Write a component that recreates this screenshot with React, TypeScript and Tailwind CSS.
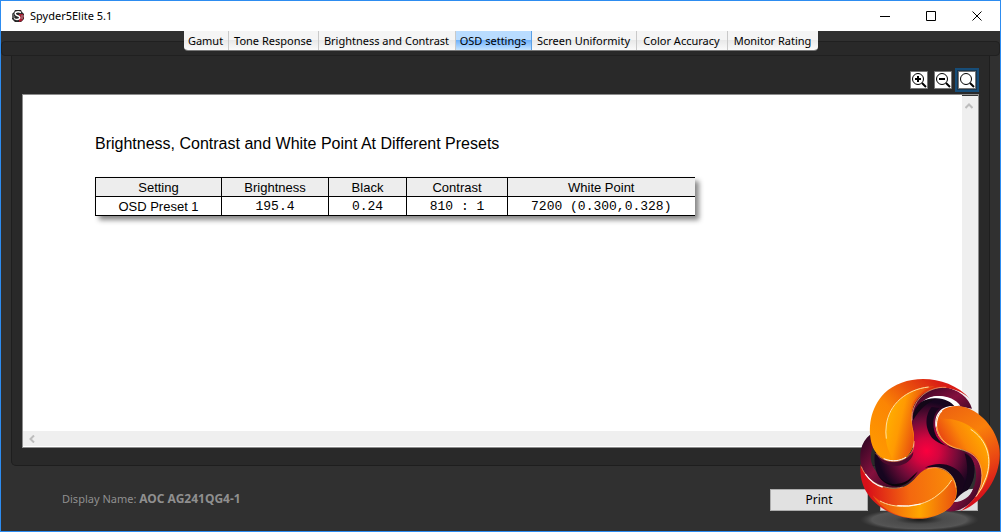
import { clsx } from "clsx";

const tabs = [
  { label: "Gamut", width: "w-[45px]" },
  { label: "Tone Response", width: "w-[90px]" },
  { label: "Brightness and Contrast", width: "w-[137px]" },
  { label: "OSD settings", width: "w-[76px]" },
  { label: "Screen Uniformity", width: "w-[105px]" },
  { label: "Color Accuracy", width: "w-[91px]" },
  { label: "Monitor Rating", width: "w-[90px]" },
];

const columns = [
  { label: "Setting", width: "w-[126px]" },
  { label: "Brightness", width: "w-[107px]" },
  { label: "Black", width: "w-[78px]" },
  { label: "Contrast", width: "w-[101px]" },
  { label: "White Point", width: "w-[187px]" },
];

const presets = [["OSD Preset 1", "195.4", "0.24", "810 : 1", "7200 (0.300,0.328)"]];

export default function App() {
  return (
    <div className="relative flex min-h-screen flex-col overflow-hidden border border-[#2d8cf0] bg-[#303030] font-['Noto_Sans',sans-serif] text-[12px]">
      <TitleBar />

      <main className="flex grow flex-col pt-2.5">
        <div className="flex h-[15px] justify-center rounded-sm border border-[#202020] bg-[#292929]">
          <nav className="-mt-[11px] flex h-5 overflow-hidden rounded-b-[4px] border-b border-[#777]">
            {tabs.map((tab) => (
              <Tab key={tab.label} label={tab.label} width={tab.width} active={tab.label === "OSD settings"} />
            ))}
          </nav>
        </div>

        <section className="mx-2.5 flex grow flex-col rounded-b-[5px] border border-t-0 border-[#1e1e1e] bg-[#292929] px-2.5 pb-[17px]">
          <div className="flex h-[38px] items-end justify-end gap-[3px] pb-0.5">
            <ZoomButton label="Zoom in" sign="plus" />
            <ZoomButton label="Zoom out" sign="minus" />
            <ZoomButton label="Fit to window" focused />
          </div>
          <Report />
        </section>
      </main>

      <footer className="flex h-[65px] items-center justify-between pr-[22px] pl-[61px]">
        <p className="text-[11px] text-[#8f8f8f]">
          Display Name: <strong className="text-[12px] font-bold">AOC AG241QG4-1</strong>
        </p>
        <div className="flex gap-3 pt-0.5">
          <button className="h-[22px] w-[98px] border border-[#adadad] bg-[#e1e1e1] text-black">Print</button>
          <button aria-label="Close" className="h-[22px] w-[98px] border border-[#adadad] bg-[#e1e1e1]" />
        </div>
      </footer>

      <Logo />
    </div>
  );
}

function TitleBar() {
  return (
    <header className="flex h-[30px] items-center bg-white pl-2.5 text-black">
      <svg width="14" height="14" viewBox="0 0 14 14" aria-hidden="true">
        <path d="M4 1h6l1 2 2 2v5l-3 3H4l-3-3V5l2-2z" fill="#272727" />
        <path d="M8 5h4l1 3-2 4-3 1z" fill="#a51c30" />
        <path d="M10 3.500Q7 2 4.500 3.500Q3.500 5.500 6 6.500Q9.500 7.500 8.500 9.500Q6 11.500 3 9.500" fill="none" stroke="#fff" strokeWidth="1.500" />
        <path d="M1 6h2M1 8h3M10 7h3M10 9h2" stroke="#999" />
      </svg>
      <h1 className="ml-[5px] grow text-[11px]">Spyder5Elite 5.1</h1>
      <WindowButton label="Minimize" d="M0 5.500h10" />
      <WindowButton label="Maximize" d="M.5.5h9v9h-9z" />
      <WindowButton label="Close window" d="M.5.5l9 9M9.500.5l-9 9" />
    </header>
  );
}

function WindowButton({ label, d }: { label: string; d: string }) {
  return (
    <button aria-label={label} className="flex h-full w-[46px] items-center justify-center">
      <svg width="10" height="10" viewBox="0 0 10 10" fill="none" stroke="#000">
        <path d={d} />
      </svg>
    </button>
  );
}

function Tab({ label, width, active }: { label: string; width: string; active: boolean }) {
  return (
    <button
      className={clsx(
        "shrink-0 border-r pt-0.5 text-[11px] whitespace-nowrap text-black last:border-r-0",
        width,
        active
          ? "border-[#5ba0e6] bg-linear-to-b from-[#b9dcff] from-45% via-[#70b2fb] via-50% to-[#c5e4ff]"
          : "border-[#c9c9c9] bg-linear-to-b from-[#f5f5f5] from-45% via-[#e9e9e9] via-50% to-[#fafafa]",
      )}
    >
      {label}
    </button>
  );
}

function ZoomButton({ label, sign, focused }: { label: string; sign?: "plus" | "minus"; focused?: boolean }) {
  return (
    <button
      aria-label={label}
      className={clsx("border-2 p-px", focused ? "border-[#174d78] bg-[#183650]" : "-mr-[3px] border-transparent")}
    >
      <svg width="18" height="18" viewBox="0 0 18 18" fill="none" stroke="#000">
        <path d="M.5.5h17v17H.5z" fill="#fff" stroke="#777" />
        <circle cx="8" cy="8" r="5.500" />
        <path d="M12 12l4 4" strokeWidth="2" />
        {sign && <path d="M5 8h6" strokeWidth="2" />}
        {sign === "plus" && <path d="M8 5v6" strokeWidth="2" />}
      </svg>
    </button>
  );
}

function Report() {
  return (
    <div className="flex grow flex-col border border-[#8c8c8c] bg-white">
      <div className="flex grow">
        <article className="grow pt-[37px] pl-[72px] font-['Liberation_Sans',sans-serif] text-black">
          <h2 className="text-[16px] leading-6">Brightness, Contrast and White Point At Different Presets</h2>
          <table className="mt-[21px] table-fixed border-l border-black text-center text-[13px] leading-4 shadow-[4px_4px_5px_#888]">
            <thead>
              <tr className="border-y border-black bg-[#ededed]">
                {columns.map((column) => (
                  <th key={column.label} className={clsx("border-r border-black px-0 pt-0.5 pb-0 font-normal last:border-r-0", column.width)}>
                    {column.label}
                  </th>
                ))}
              </tr>
            </thead>
            <tbody>
              {presets.map(([name, ...values]) => (
                <tr key={name} className="border-b border-black bg-white">
                  <td className="border-r border-black px-0 pt-0.5 pb-0">{name}</td>
                  {values.map((value) => (
                    <td key={value} className="border-r border-black px-0 pt-0.5 pb-0 font-['Liberation_Mono',monospace] last:border-r-0">
                      {value}
                    </td>
                  ))}
                </tr>
              ))}
            </tbody>
          </table>
        </article>
        <div className="flex w-4 shrink-0 justify-center border-t border-[#333] bg-[#efefef] pt-1.5 pr-0.5">
          <svg width="8" height="8" viewBox="0 0 8 8" fill="none" stroke="#bdbdbd" strokeWidth="2">
            <path d="M.5 6L4 2.500 7.500 6" />
          </svg>
        </div>
      </div>
      <div className="mb-px flex h-[15px] items-center bg-[#efefef] pl-[5px]">
        <svg width="8" height="8" viewBox="0 0 8 8" fill="none" stroke="#bdbdbd" strokeWidth="2">
          <path d="M6 .5L2.500 4 6 7.500" />
        </svg>
      </div>
    </div>
  );
}

function Logo() {
  return (
    <svg className="pointer-events-none absolute -right-px -bottom-px" width="151" height="160" viewBox="0 0 453 480" aria-hidden="true">
      <defs>
        <radialGradient id="core" gradientUnits="userSpaceOnUse" cx="230" cy="237" r="155">
          <stop offset="0" stopColor="#fb003e" />
          <stop offset=".25" stopColor="#d4053f" />
          <stop offset=".6" stopColor="#710b38" />
          <stop offset=".95" stopColor="#16051f" />
        </radialGradient>
        <linearGradient id="flameA" gradientUnits="userSpaceOnUse" x1="70" y1="240" x2="270" y2="30">
          <stop offset="0" stopColor="#ff9a00" />
          <stop offset=".45" stopColor="#fb8504" />
          <stop offset=".8" stopColor="#e5420f" />
          <stop offset="1" stopColor="#d91d16" />
        </linearGradient>
        <linearGradient id="flameB" gradientUnits="userSpaceOnUse" x1="290" y1="110" x2="430" y2="360">
          <stop offset="0" stopColor="#ee6410" />
          <stop offset=".35" stopColor="#f9800a" />
          <stop offset=".7" stopColor="#ea4713" />
          <stop offset="1" stopColor="#d6101b" />
        </linearGradient>
        <linearGradient id="flameC" gradientUnits="userSpaceOnUse" x1="300" y1="310" x2="50" y2="330">
          <stop offset="0" stopColor="#f98a08" />
          <stop offset=".5" stopColor="#f4680f" />
          <stop offset="1" stopColor="#d81019" />
        </linearGradient>
        <linearGradient id="glowA" gradientUnits="userSpaceOnUse" x1="110" y1="170" x2="195" y2="190">
          <stop offset="0" stopColor="#ffab00" />
          <stop offset=".4" stopColor="#ff9a02" />
          <stop offset="1" stopColor="#e8500f" />
        </linearGradient>
        <linearGradient id="glowB" gradientUnits="userSpaceOnUse" x1="390" y1="190" x2="300" y2="240">
          <stop offset="0" stopColor="#ffa500" />
          <stop offset=".5" stopColor="#fb8607" />
          <stop offset="1" stopColor="#ea4a12" />
        </linearGradient>
        <linearGradient id="glowC" gradientUnits="userSpaceOnUse" x1="100" y1="380" x2="320" y2="390">
          <stop offset="0" stopColor="#ee5b10" />
          <stop offset=".5" stopColor="#ffa600" />
          <stop offset="1" stopColor="#e9500f" />
        </linearGradient>
        <linearGradient id="ribbon" x1="0" y1="0" x2="1" y2="1">
          <stop offset="0" stopColor="#22041f" />
          <stop offset=".5" stopColor="#84103d" />
          <stop offset="1" stopColor="#20041d" />
        </linearGradient>
        <radialGradient id="floor">
          <stop offset="0" stopColor="#191919" />
          <stop offset=".4" stopColor="#4b4b4b" />
          <stop offset=".8" stopColor="#555" />
          <stop offset="1" stopColor="#444" stopOpacity="0" />
        </radialGradient>
      </defs>

      <ellipse cx="208" cy="443" rx="178" ry="34" fill="url(#floor)" />

      {/* dark ribbons behind the flames */}
      <path d="M184 142C181 82 225 42 280 46C325 50 357 78 366 110L325 103C305 70 250 60 219 88C200 104 190 125 190 150Z" fill="url(#ribbon)" />
      <path d="M230 83C260 62 311 72 331 101L307 102C289 86 263 80 230 83Z" fill="#fff" />
      <path d="M62 187C30 210 25 255 36 288C50 330 102 355 157 348L158 332C112 334 73 305 64 270C60 248 65 229 75 218Z" fill="url(#ribbon)" />
      <path d="M352 235C389 250 405 297 392 340C380 390 333 426 286 417L311 390C345 388 371 362 377 325C381 291 373 260 342 241Z" fill="url(#ribbon)" />

      {/* core */}
      <path d="M187 134C194 95 225 77 260 79C284 80 303 90 313 102C273 99 250 128 257 166C264 207 293 221 329 233C361 244 377 267 373 304C370 341 346 371 313 386C327 345 307 299 268 289C220 278 207 313 176 332C145 352 105 343 84 310C73 288 71 258 76 236C103 277 169 279 187 236C203 200 177 167 187 134Z" fill="url(#core)" />
      <path d="M245 105C221 134 227 177 249 200C268 218 299 224 324 232C282 226 256 203 251 167C248 142 253 122 269 108Z" fill="#17051d" />
      <path d="M77 238C100 277 162 279 190 240C190 260 170 279 139 282C111 284 84 268 77 238Z" fill="#4d0a2d" />
      <path d="M225 287C266 265 319 277 340 316C349 335 339 358 315 384C329 345 307 302 274 289C255 284 240 284 225 287Z" fill="#18051c" />
      <path d="M83 307C104 339 139 345 174 325L204 298C181 336 149 352 114 337C100 331 89 320 83 307Z" fill="#09050a" />
      <path d="M189 130C197 94 224 79 258 80C233 91 211 107 189 145Z" fill="#130717" />
      <path d="M344 244C371 256 377 285 371 312C364 345 345 367 321 379C350 344 361 300 344 244Z" fill="#15061b" />
      <path d="M313 390C329 366 345 354 369 350C361 374 339 389 313 390Z" fill="#e1e1e1" />

      {/* upper left flame */}
      <path d="M67 221C51 171 61 107 103 64C163 5 289 3 361 81C321 42 254 34 215 70C175 105 184 145 191 180C197 226 178 264 137 267C103 270 79 252 67 221Z" fill="url(#flameA)" />
      <path d="M254 43C176 43 120 94 109 160C102 201 112 237 131 265C176 263 197 230 190 187C182 145 171 101 205 71C219 57 235 48 254 43Z" fill="url(#glowA)" />
      <path d="M236 45C170 52 117 96 109 159Q106 180 109 200" fill="none" stroke="#ffe2a2" strokeWidth="3" />
      <path d="M77 243C102 276 157 279 184 242C191 230 193 219 193 207" fill="none" stroke="#f79a52" strokeWidth="2" />
      <path d="M101 260C128 271 151 266 168 256" fill="none" stroke="#fff" strokeWidth="3" />
      <path d="M186 145C183 91 227 43 289 46" fill="none" stroke="#ffc278" strokeWidth="2" />

      {/* right flame */}
      <path d="M258 151C260 120 286 101 322 102C377 104 434 158 447 222C462 304 400 395 330 418C378 387 405 338 393 291C383 244 349 235 317 229C276 216 256 188 258 151Z" fill="url(#flameB)" />
      <path d="M265 141C332 133 397 174 415 234C428 287 411 338 382 370C399 332 400 287 382 258C357 223 311 235 281 205C264 188 258 164 265 141Z" fill="url(#glowB)" />
      <path d="M362 172C410 203 429 258 408 317Q397 350 378 374" fill="none" stroke="#ffe6b5" strokeWidth="3" />
      <path d="M277 116C241 152 266 215 319 229C361 239 393 252 396 310Q397 339 384 362" fill="none" stroke="#ffc278" strokeWidth="2" />
      <path d="M259 164Q259 131 276 117" fill="none" stroke="#fff" strokeWidth="3" />

      {/* lower flame */}
      <path d="M32 277C49 334 111 363 159 345C204 329 201 286 255 287C301 290 330 333 318 376C309 409 269 435 218 440C122 447 20 380 32 277Z" fill="url(#flameC)" />
      <path d="M68 370C99 403 155 410 212 396C261 384 291 354 306 322C323 346 323 381 301 405C268 436 201 445 151 431C115 420 85 399 68 370Z" fill="url(#glowC)" />
      <path d="M90 387C130 410 204 410 254 376Q289 351 305 324" fill="none" stroke="#ffe09c" strokeWidth="3" />
      <path d="M142 401Q175 405 212 396" fill="none" stroke="#fff" strokeWidth="3" />
      <path d="M34 284C51 330 106 359 158 345M232 291C273 277 312 299 318 347" fill="none" stroke="#ffc278" strokeWidth="2" />
      <path d="M46 306Q67 337 98 345" fill="none" stroke="#fff" strokeWidth="4" />
    </svg>
  );
}
